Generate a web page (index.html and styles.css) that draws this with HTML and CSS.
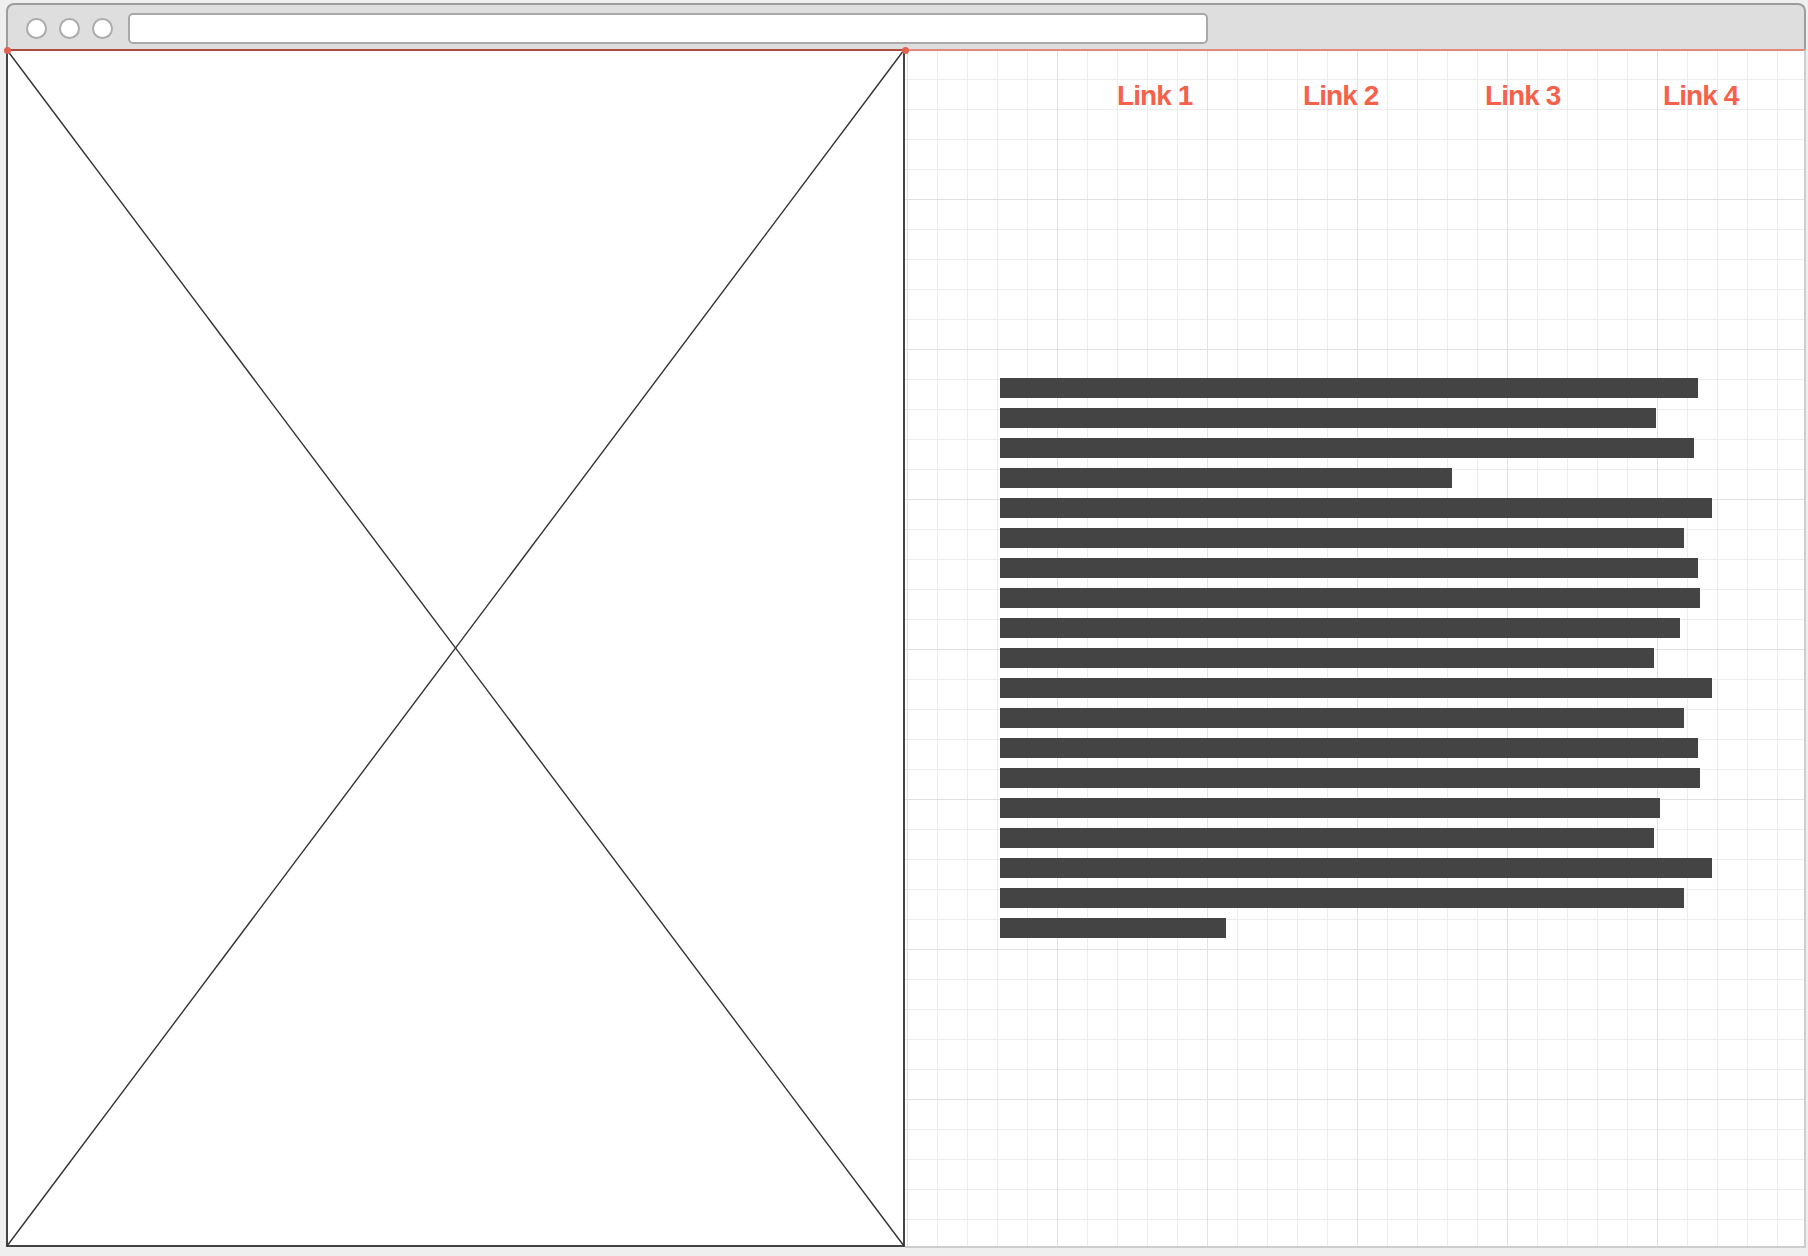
FILE: index.html
```html
<!DOCTYPE html>
<html lang="en">
<head>
<meta charset="utf-8">
<title>Wireframe</title>
<link rel="stylesheet" href="styles.css">
</head>
<body>
<div class="window">
  <div class="toolbar">
    <span class="dot-btn"></span>
    <span class="dot-btn"></span>
    <span class="dot-btn"></span>
    <div class="address"></div>
  </div>
  <div class="content">
    <div class="panel">
      <svg class="cross" viewBox="0 0 895 1194" preserveAspectRatio="none">
        <line x1="-1" y1="-1" x2="896" y2="1195" />
        <line x1="896" y1="-1" x2="-1" y2="1195" />
      </svg>
    </div>
    <div class="grid-area">
      <nav class="nav">
        <a class="nav-link">Link 1</a>
        <a class="nav-link">Link 2</a>
        <a class="nav-link">Link 3</a>
        <a class="nav-link">Link 4</a>
      </nav>
      <div class="text-block">
        <div class="bar" style="width:698px"></div>
        <div class="bar" style="width:656px"></div>
        <div class="bar" style="width:694px"></div>
        <div class="bar" style="width:452px"></div>
        <div class="bar" style="width:712px"></div>
        <div class="bar" style="width:684px"></div>
        <div class="bar" style="width:698px"></div>
        <div class="bar" style="width:700px"></div>
        <div class="bar" style="width:680px"></div>
        <div class="bar" style="width:654px"></div>
        <div class="bar" style="width:712px"></div>
        <div class="bar" style="width:684px"></div>
        <div class="bar" style="width:698px"></div>
        <div class="bar" style="width:700px"></div>
        <div class="bar" style="width:660px"></div>
        <div class="bar" style="width:654px"></div>
        <div class="bar" style="width:712px"></div>
        <div class="bar" style="width:684px"></div>
        <div class="bar" style="width:226px"></div>
      </div>
    </div>
    <span class="handle handle-left"></span>
    <span class="handle handle-right"></span>
  </div>
</div>
</body>
</html>
```
FILE: styles.css
```css
* { box-sizing: border-box; }

html, body {
  margin: 0;
  padding: 0;
  background: #efefef;
  font-family: "Liberation Sans", Arial, sans-serif;
}

body {
  height: 1256px;
  overflow: hidden;
}

.window {
  margin: 3px 0 0 6px;
  width: 1800px;
}

.toolbar {
  height: 46px;
  background: #dedede;
  border: 2px solid #9d9d9d;
  border-bottom: none;
  border-radius: 8px 8px 0 0;
  display: flex;
  align-items: center;
  padding: 2px 0 0 18px;
}

.dot-btn {
  width: 21px;
  height: 21px;
  border-radius: 50%;
  background: #fff;
  border: 2px solid #ababab;
  margin-right: 12px;
  flex: none;
}

.dot-btn:nth-child(3) { margin-right: 15px; }

.address {
  width: 1080px;
  height: 31px;
  background: #fff;
  border: 2px solid #a9a9a9;
  border-radius: 5px;
}

.content {
  position: relative;
  display: flex;
  height: 1199px;
}

.panel {
  width: 899px;
  height: 1198px;
  flex: none;
  background: #fff;
  border: 2px solid #444;
  border-top-color: #aa4b3e;
  position: relative;
}

.cross {
  display: block;
  width: 100%;
  height: 100%;
  overflow: visible;
}

.cross line {
  stroke: #333;
  stroke-width: 1.4;
  vector-effect: non-scaling-stroke;
}

.grid-area {
  flex: 1;
  background-color: #fff;
  border-top: 2px solid #e48a7c;
  border-right: 2px solid #cdcdcd;
  border-bottom: 2px solid #cdcdcd;
  background-image:
    linear-gradient(to right, #e1e1e1 1px, transparent 1px),
    linear-gradient(to bottom, #e1e1e1 1px, transparent 1px),
    linear-gradient(to right, #ececec 1px, transparent 1px),
    linear-gradient(to bottom, #ececec 1px, transparent 1px);
  background-size: 150px 150px, 150px 150px, 30px 30px, 30px 30px;
  background-position: 2px 148px, 2px 148px, 2px 28px, 2px 28px;
  padding: 31px 0 0 0;
}

.nav {
  display: grid;
  grid-template-columns: 186px 182px 178px auto;
  padding-left: 212px;
  height: 28px;
}

.nav-link {
  font-size: 28px;
  line-height: 28px;
  font-weight: bold;
  letter-spacing: -0.9px;
  color: #f5614a;
  text-decoration: none;
  white-space: nowrap;
}

.text-block {
  margin: 268px 0 0 95px;
  display: flex;
  flex-direction: column;
  gap: 10px;
}

.bar {
  height: 20px;
  background: #444;
}

.handle {
  position: absolute;
  top: -2px;
  width: 7px;
  height: 7px;
  border-radius: 50%;
  background: #e2614f;
}

.handle-left { left: -2px; }
.handle-right { left: 896px; }
```
